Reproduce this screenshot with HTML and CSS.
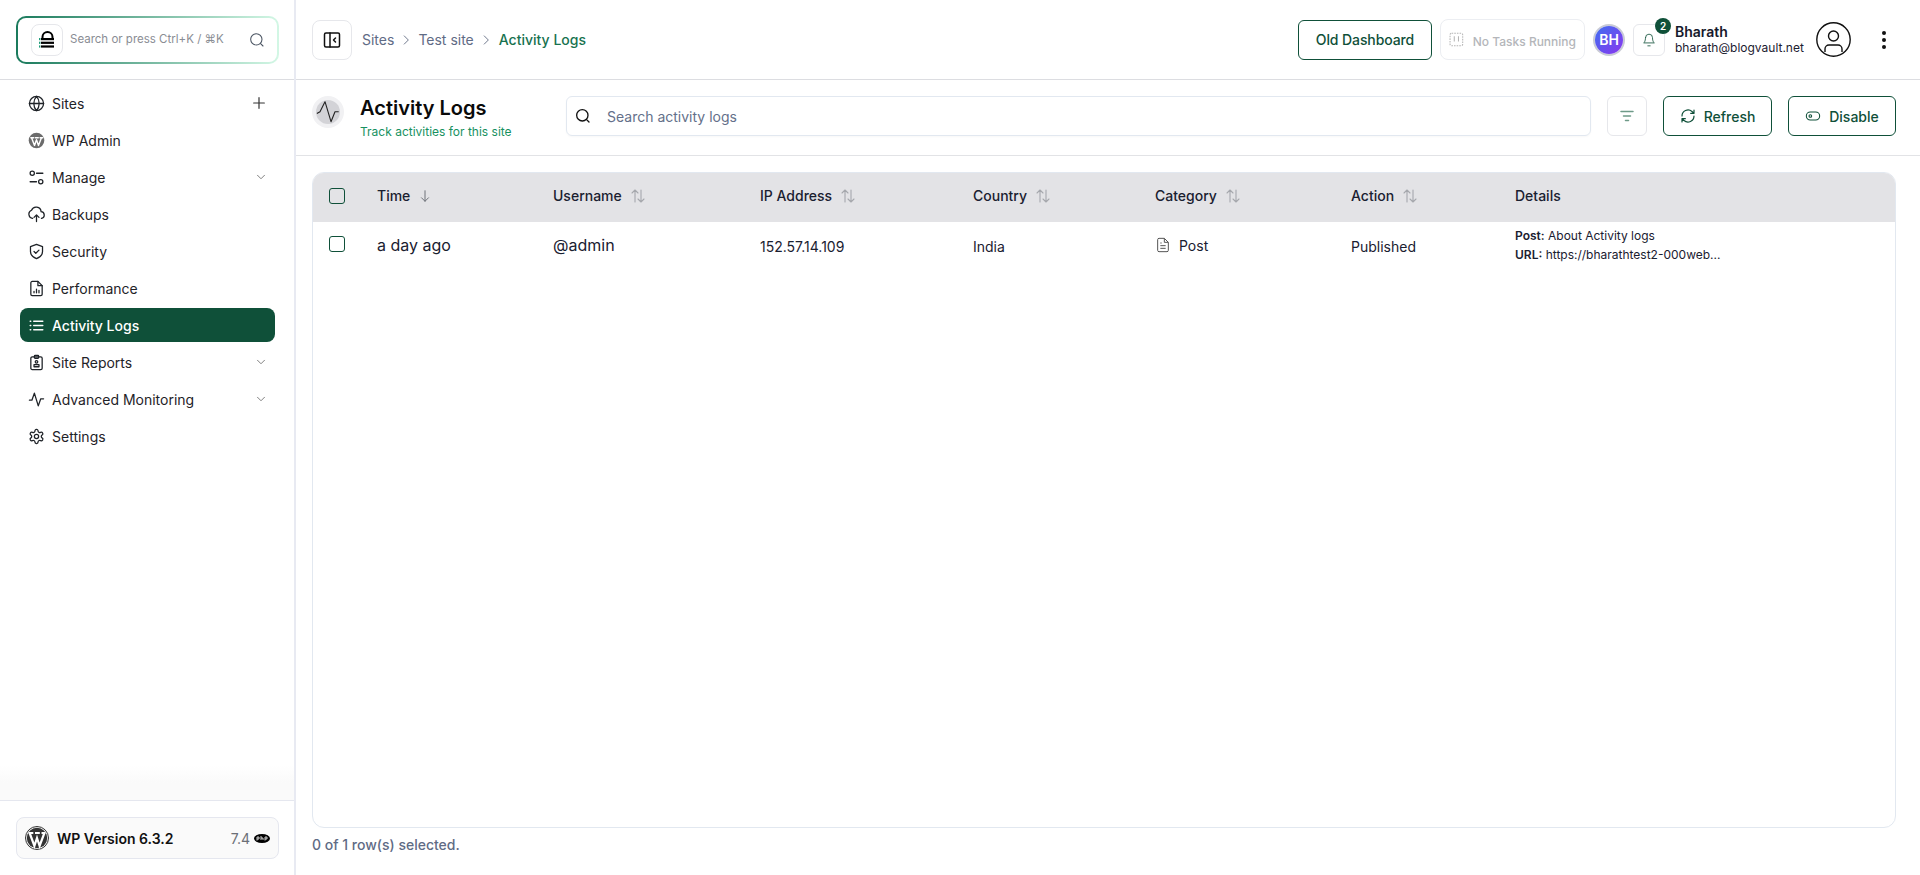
FILE: index.html
```html
<!DOCTYPE html>
<html lang="en">
<head>
<meta charset="utf-8">
<title>Activity Logs</title>
<link rel="stylesheet" href="styles.css">
</head>
<body>
<div class="app">
  <aside class="sidebar">
    <div class="side-top">
      <div class="search-grad">
        <div class="search-inner">
          <span class="logo-box">
            <svg width="16" height="18" viewBox="0 0 16 18"><path d="M3.500 7.500V6a5 5 0 0 1 10 0v1.500" fill="none" stroke="#000" stroke-width="2"/><rect x="2" y="7" width="13" height="2.200" fill="#000"/><rect x="2" y="10.700" width="13" height="2.200" fill="#000"/><rect x="2" y="14.400" width="13" height="2.200" fill="#000"/><rect x="0" y="7" width="1.400" height="2.200" fill="#1f9d7a"/><rect x="0" y="10.700" width="1.400" height="2.200" fill="#1f9d7a"/><rect x="0" y="14.400" width="1.400" height="2.200" fill="#1f9d7a"/></svg>
          </span>
          <span class="search-hint">Search or press Ctrl+K / ⌘K</span>
          <svg class="search-ico" width="16" height="16" viewBox="0 0 24 24" fill="none" stroke="#4b5563" stroke-width="1.600" stroke-linecap="round"><circle cx="11" cy="11" r="8.500"/><path d="m21 21-3.600-3.600"/></svg>
        </div>
      </div>
    </div>
    <nav class="nav">
      <a class="nav-item"><svg class="ni" viewBox="0 0 24 24"><circle cx="12" cy="12" r="10"/><path d="M2 12h20M12 2a15 15 0 0 1 0 20M12 2a15 15 0 0 0 0 20"/></svg><span class="nav-label">Sites</span><svg class="plus" viewBox="0 0 24 24"><path d="M12 4v16M4 12h16"/></svg></a>
      <a class="nav-item"><svg class="ni wp" viewBox="0 0 24 24"><circle cx="12" cy="12" r="11" fill="#6b6b6b" stroke="none"/><path d="M5 8l4.200 11L12 11l2.800 8L19 8M4 8h4M10.500 8h4M17 8h4" fill="none" stroke="#fff" stroke-width="2"/></svg><span class="nav-label">WP Admin</span></a>
      <a class="nav-item"><svg class="ni" viewBox="0 0 24 24"><circle cx="6" cy="6" r="3"/><path d="M12 6h9M3 18h9"/><circle cx="18" cy="18" r="3"/></svg><span class="nav-label">Manage</span><svg class="chev" viewBox="0 0 24 24"><path d="m6 9 6 6 6-6"/></svg></a>
      <a class="nav-item"><svg class="ni" viewBox="0 0 24 24"><path d="M6.500 17.500A6 6 0 0 1 5 6a7 7 0 0 1 13.500 2A4.800 4.800 0 0 1 19 17.500M12 22v-9M8.500 16l3.500-3.500 3.500 3.500"/></svg><span class="nav-label">Backups</span></a>
      <a class="nav-item"><svg class="ni" viewBox="0 0 24 24"><path d="M12 2l8.500 3v7c0 5-3.700 8.300-8.500 10-4.800-1.700-8.500-5-8.500-10V5z"/><path d="m8.500 12 2.500 2.500 4.500-4.500"/></svg><span class="nav-label">Security</span></a>
      <a class="nav-item"><svg class="ni" viewBox="0 0 24 24"><path d="M14 2H6a2 2 0 0 0-2 2v16a2 2 0 0 0 2 2h12a2 2 0 0 0 2-2V8z"/><path d="M14 2v6h6M8.500 18v-2M12 18v-5M15.500 18v-3.500"/></svg><span class="nav-label">Performance</span></a>
      <a class="nav-item active"><svg class="ni" viewBox="0 0 24 24"><path d="M8 6h13M8 12h13M8 18h13M3 6h1M3 12h1M3 18h1"/></svg><span class="nav-label">Activity Logs</span></a>
      <a class="nav-item"><svg class="ni" viewBox="0 0 24 24"><rect x="4" y="4" width="16" height="18" rx="2"/><rect x="9" y="2" width="6" height="4" rx="1"/><circle cx="12" cy="11" r="1.800"/><path d="M8.500 18v-3h7v3z"/></svg><span class="nav-label">Site Reports</span><svg class="chev" viewBox="0 0 24 24"><path d="m6 9 6 6 6-6"/></svg></a>
      <a class="nav-item"><svg class="ni" viewBox="0 0 24 24"><path d="M2 13h3.500L9 3l5.500 18L18 11h4"/></svg><span class="nav-label">Advanced Monitoring</span><svg class="chev" viewBox="0 0 24 24"><path d="m6 9 6 6 6-6"/></svg></a>
      <a class="nav-item"><svg class="ni" viewBox="0 0 24 24"><path d="M12.200 2h-.4a2 2 0 0 0-2 2v.2a2 2 0 0 1-1 1.700l-.4.300a2 2 0 0 1-2 0l-.2-.1a2 2 0 0 0-2.700.7l-.2.400a2 2 0 0 0 .7 2.700l.2.100a2 2 0 0 1 1 1.700v.5a2 2 0 0 1-1 1.700l-.2.100a2 2 0 0 0-.7 2.700l.2.400a2 2 0 0 0 2.700.7l.2-.1a2 2 0 0 1 2 0l.4.300a2 2 0 0 1 1 1.700v.2a2 2 0 0 0 2 2h.4a2 2 0 0 0 2-2v-.2a2 2 0 0 1 1-1.700l.4-.3a2 2 0 0 1 2 0l.2.100a2 2 0 0 0 2.700-.7l.2-.4a2 2 0 0 0-.7-2.700l-.2-.1a2 2 0 0 1-1-1.700v-.5a2 2 0 0 1 1-1.700l.2-.1a2 2 0 0 0 .7-2.700l-.2-.4a2 2 0 0 0-2.700-.7l-.2.100a2 2 0 0 1-2 0l-.4-.3a2 2 0 0 1-1-1.700V4a2 2 0 0 0-2-2z"/><circle cx="12" cy="12" r="3"/></svg><span class="nav-label">Settings</span></a>
    </nav>
    <div class="side-fade"></div>
    <div class="side-foot">
      <div class="wp-box">
        <svg class="wp-logo" viewBox="0 0 24 24"><circle cx="12" cy="12" r="11.500" fill="none" stroke="#333" stroke-width="1"/><circle cx="12" cy="12" r="10.200" fill="#333"/><path d="M4.800 7.500l4.600 12.500L12 12l2.600 8 4.600-12.500M3.500 7h4.800M10 7h4.800M16.500 7h4" fill="none" stroke="#fff" stroke-width="2.200"/></svg>
        <span class="wp-name">WP Version 6.3.2</span>
        <span class="php-num">7.4</span>
        <svg class="php-logo" width="16" height="9" viewBox="0 0 16 9"><ellipse cx="8" cy="4.500" rx="8" ry="4.500" fill="#000"/><path d="M3 6.500V3h2v2H3M7 2v4M7 4h2v2M11 6.500V3h2v2h-2" fill="none" stroke="#fff" stroke-width=".8"/></svg>
      </div>
    </div>
  </aside>
  <main class="main">
    <header class="topbar">
      <button class="collapse">
        <svg width="18" height="18" viewBox="0 0 18 18" fill="none" stroke="#111" stroke-width="1.500" stroke-linejoin="round" stroke-linecap="round"><rect x="1.500" y="2" width="15" height="14" rx="1.500"/><path d="M7 2v14M12.500 7 10.500 9l2 2"/></svg>
      </button>
      <div class="crumbs">
        <span>Sites</span>
        <svg class="crumb-sep" viewBox="0 0 24 24"><path d="m9 5 7 7-7 7"/></svg>
        <span>Test site</span>
        <svg class="crumb-sep" viewBox="0 0 24 24"><path d="m9 5 7 7-7 7"/></svg>
        <span class="crumb-now">Activity Logs</span>
      </div>
      <div class="top-right">
        <button class="btn old">Old Dashboard</button>
        <div class="tasks">
          <svg width="15" height="15" viewBox="0 0 14 14" fill="none" stroke="#b5b5b5" stroke-width="1" stroke-dasharray="1.500 1"><rect x="1" y="1" width="12" height="12" rx="1.500"/><path d="M5 4v5M9 4v5" stroke-dasharray="none"/></svg>
          <span class="tasks-text">No Tasks Running</span>
        </div>
        <div class="avatar">BH</div>
        <div class="bell">
          <svg width="14" height="16" viewBox="0 0 24 26" fill="none" stroke="#0f5039" stroke-width="1.400" stroke-linecap="round" stroke-linejoin="round"><path d="M6 9a6 6 0 0 1 12 0c0 7 3 9 3 9H3s3-2 3-9M10 23h4"/></svg>
          <span class="badge">2</span>
        </div>
        <div class="user">
          <div class="user-name">Bharath</div>
          <div class="user-mail">bharath@blogvault.net</div>
        </div>
        <svg class="profile" width="35" height="35" viewBox="0 0 35 35" fill="none" stroke="#111" stroke-width="1.400"><circle cx="17.500" cy="17.500" r="16.700"/><circle cx="17.500" cy="14" r="5"/><path d="M9 30v-3a4 4 0 0 1 4-4h9a4 4 0 0 1 4 4v3"/></svg>
        <svg class="dots" width="6" height="20" viewBox="0 0 6 20"><circle cx="3" cy="3" r="2" fill="#111"/><circle cx="3" cy="10" r="2" fill="#111"/><circle cx="3" cy="17" r="2" fill="#111"/></svg>
      </div>
    </header>
    <section class="pagehead">
      <div class="pg-ico">
        <span class="pg-ico-in">
          <svg width="24" height="24" viewBox="0 0 24 24" fill="none" stroke="#222" stroke-width="1.100" stroke-linecap="round" stroke-linejoin="round"><path d="M1.300 13.300 4 11.700 9 1.700l6 20 4-10h3.300"/></svg>
        </span>
      </div>
      <div class="pg-title">
        <h1>Activity Logs</h1>
        <p>Track activities for this site</p>
      </div>
      <div class="pg-search">
        <svg width="16" height="16" viewBox="0 0 24 24" fill="none" stroke="#111" stroke-width="2" stroke-linecap="round"><circle cx="11" cy="11" r="8.500"/><path d="m21 21-3.600-3.600"/></svg>
        <span>Search activity logs</span>
      </div>
      <button class="filter">
        <svg width="16" height="12" viewBox="0 0 16 12" stroke="#6e9a88" stroke-width="1.500" stroke-linecap="round"><path d="M2 1.500h12M4.500 6h7M6.500 10.500h3"/></svg>
      </button>
      <button class="btn act refresh">
        <svg width="16" height="16" viewBox="0 0 24 24" fill="none" stroke="#0f5039" stroke-width="1.800" stroke-linecap="round" stroke-linejoin="round"><path d="M3 12a9 9 0 0 1 15-6.700L21 8M21 3v5h-5M21 12a9 9 0 0 1-15 6.700L3 16M3 21v-5h5"/></svg>
        Refresh
      </button>
      <button class="btn act disable">
        <svg width="16" height="16" viewBox="0 0 24 24" fill="none" stroke="#0f5039" stroke-width="1.600"><rect x="2" y="6" width="20" height="12" rx="6"/><circle cx="8" cy="12" r="2"/></svg>
        Disable
      </button>
    </section>
    <section class="content">
      <div class="card">
        <div class="row head">
          <span class="check-cell"><span class="check"></span></span>
          <span class="th">Time <svg class="sort on" viewBox="0 0 16 16"><path d="M8 2v12M4 10l4 4 4-4"/></svg></span>
          <span class="th">Username <svg class="sort" viewBox="0 0 16 16"><path d="M5 14V2M2 5l3-3 3 3M11 2v12M8 11l3 3 3-3"/></svg></span>
          <span class="th">IP Address <svg class="sort" viewBox="0 0 16 16"><path d="M5 14V2M2 5l3-3 3 3M11 2v12M8 11l3 3 3-3"/></svg></span>
          <span class="th">Country <svg class="sort" viewBox="0 0 16 16"><path d="M5 14V2M2 5l3-3 3 3M11 2v12M8 11l3 3 3-3"/></svg></span>
          <span class="th">Category <svg class="sort" viewBox="0 0 16 16"><path d="M5 14V2M2 5l3-3 3 3M11 2v12M8 11l3 3 3-3"/></svg></span>
          <span class="th">Action <svg class="sort" viewBox="0 0 16 16"><path d="M5 14V2M2 5l3-3 3 3M11 2v12M8 11l3 3 3-3"/></svg></span>
          <span class="th">Details</span>
        </div>
        <div class="row body">
          <span class="check-cell"><span class="check"></span></span>
          <span class="td big">a day ago</span>
          <span class="td big">@admin</span>
          <span class="td">152.57.14.109</span>
          <span class="td">India</span>
          <span class="td cat"><svg width="16" height="16" viewBox="0 0 24 24" fill="none" stroke="#555" stroke-width="1.500" stroke-linejoin="round"><path d="M14 2H6a2 2 0 0 0-2 2v16a2 2 0 0 0 2 2h12a2 2 0 0 0 2-2V8z"/><path d="M14 2v6h6M8 13h8M8 17h8M8 9h2"/></svg>Post</span>
          <span class="td">Published</span>
          <span class="details">
            <span class="dline"><b>Post:</b> About Activity logs</span>
            <span class="dline"><b>URL:</b> https://bharathtest2-000web...</span>
          </span>
        </div>
      </div>
      <p class="selected">0 of 1 row(s) selected.</p>
    </section>
  </main>
</div>
</body>
</html>
```
FILE: styles.css
```css
* { box-sizing: border-box; }
html, body { margin: 0; padding: 0; height: 100%; }
body { font-family: "Inter", "Liberation Sans", sans-serif; color: #111827; background: #fff; overflow: hidden; }
button { font-family: inherit; background: #fff; cursor: pointer; padding: 0; }
h1, p { margin: 0; }

.app { display: flex; height: 875px; }

.sidebar { width: 296px; flex: none; border-right: 2px solid #e8eaf2; display: flex; flex-direction: column; }
.side-top { height: 80px; flex: none; padding: 16px 16px 0; border-bottom: 1px solid #dcdde1; }
.search-grad { height: 48px; width: 263px; border-radius: 10px; padding: 2px; background: linear-gradient(90deg, #1a7a5c 0%, #d3f7e5 100%); }
.search-inner { height: 100%; background: #fff; border-radius: 8px; display: flex; align-items: center; padding: 0 12px 0 13px; }
.logo-box { width: 32px; height: 32px; border: 1px solid #e6e7eb; border-radius: 8px; display: flex; align-items: center; justify-content: center; flex: none; }
.search-hint { font-size: 11.500px; color: #8a8d94; margin-left: 7px; margin-top: -2px; flex: 1; white-space: nowrap; }
.search-ico { flex: none; }

.nav { padding: 6px 19px 0 20px; display: flex; flex-direction: column; gap: 3px; }
.nav-item { display: flex; align-items: center; height: 34px; border-radius: 8px; padding: 0 10px 0 8px; font-size: 14px; color: #1f2328; }
.nav-item.active { background: #0f5039; color: #fff; font-weight: 500; }
.ni { width: 17px; height: 17px; flex: none; margin-right: 7px; fill: none; stroke: #1f2328; stroke-width: 1.800; stroke-linecap: round; stroke-linejoin: round; }
.active .ni { stroke: #fff; }
.nav-label { flex: 1; white-space: nowrap; }
.plus { width: 16px; height: 16px; fill: none; stroke: #333; stroke-width: 1.800; stroke-linecap: round; margin-right: -2px; }
.chev { width: 14px; height: 14px; fill: none; stroke: #777; stroke-width: 1.600; stroke-linecap: round; stroke-linejoin: round; margin-right: -3px; }

.side-fade { flex: 1; background: linear-gradient(180deg, #fff 90%, #fafafa 95%, #fafafa 100%); }
.side-foot { height: 75px; flex: none; border-top: 1px solid #e5e7ef; padding: 16px 16px 0; }
.wp-box { width: 263px; height: 42px; border: 1px solid #e5e7ef; border-radius: 8px; background: #fafafa; display: flex; align-items: center; padding: 0 8px; }
.wp-logo { width: 24px; height: 24px; flex: none; }
.wp-name { font-size: 14px; font-weight: 600; color: #111; margin-left: 8px; flex: 1; white-space: nowrap; }
.php-num { font-size: 14px; color: #6b6f76; margin-right: -1px; }
.php-logo { margin-left: 5px; }

.main { flex: 1; min-width: 0; display: flex; flex-direction: column; }
.topbar { height: 80px; flex: none; border-bottom: 1px solid #dcdde1; display: flex; align-items: center; padding: 0 16px; }
.collapse { width: 40px; height: 40px; border: 1px solid #e6e7eb; border-radius: 8px; display: flex; align-items: center; justify-content: center; flex: none; }
.crumbs { display: flex; align-items: center; font-size: 14px; color: #5f6b85; margin-left: 10px; gap: 5px; font-weight: 400; }
.crumb-sep { width: 14px; height: 14px; fill: none; stroke: #667085; stroke-width: 1.600; stroke-linecap: round; stroke-linejoin: round; }
.crumb-now { color: #17724f; font-weight: 500; margin-left: 1px; }

.top-right { margin-left: auto; display: flex; align-items: center; }
.btn { border: 1px solid #0f5039; border-radius: 6px; color: #0f5039; font-weight: 500; font-size: 14px; }
.old { width: 134px; height: 40px; letter-spacing: -.1px; }
.tasks { width: 145px; height: 41px; margin-left: 8px; border: 1px solid #eceef2; border-radius: 8px; display: flex; align-items: center; gap: 9px; padding: 0 8px; font-size: 12px; color: #b4b6ba; font-weight: 500; white-space: nowrap; }
.tasks-text { margin-top: 4px; }
.avatar { width: 28px; height: 28px; margin-left: 10px; border-radius: 50%; background: linear-gradient(135deg, #3f6ff0, #8a36ee); box-shadow: 0 0 0 2px #c9cbd6; color: #fff; font-size: 14px; font-weight: 600; display: flex; align-items: center; justify-content: center; flex: none; }
.bell { width: 32px; height: 32px; margin-left: 10px; border: 1px solid #e6e7eb; border-radius: 6px; display: flex; align-items: center; justify-content: center; position: relative; flex: none; }
.badge { position: absolute; top: -7px; right: -7px; width: 16px; height: 16px; border-radius: 50%; background: #0f5039; color: #fff; font-size: 10px; font-weight: 600; display: flex; align-items: center; justify-content: center; }
.user { margin-left: 10px; width: 129px; }
.user-name { font-size: 14px; font-weight: 600; line-height: 16px; color: #16192c; }
.user-mail { font-size: 12px; line-height: 16px; color: #1c2030; white-space: nowrap; }
.profile { margin-left: 12px; flex: none; }
.dots { margin-left: 30px; margin-right: 17px; flex: none; }

.pagehead { height: 76px; flex: none; border-bottom: 1px solid #e2e3e6; display: flex; align-items: center; padding: 0 24px 3px 16px; }
.pg-ico { width: 32px; height: 32px; margin-top: -8px; border-radius: 50%; background: #f1f1f3; display: flex; align-items: center; justify-content: center; flex: none; }
.pg-ico-in { width: 24px; height: 24px; border-radius: 50%; background: #d3d3d7; display: flex; align-items: center; justify-content: center; }
.pg-title { margin-left: 16px; margin-top: 5px; width: 206px; flex: none; }
.pg-title h1 { font-size: 20px; font-weight: 600; line-height: 24px; color: #0a0a0a; }
.pg-title p { font-size: 12px; line-height: 18px; color: #17915f; white-space: nowrap; margin-top: 3px; }
.pg-search { flex: 1; height: 40px; border: 1px solid #e2e8f0; border-radius: 6px; display: flex; align-items: center; gap: 16px; padding: 0 8px; font-size: 14px; color: #64708a; min-width: 0; box-shadow: 0 1px 2px rgba(0,0,0,.03); }
.filter { width: 40px; height: 40px; margin-left: 16px; border: 1px solid #e6e7eb; border-radius: 6px; display: flex; align-items: center; justify-content: center; flex: none; }
.act { height: 40px; display: flex; align-items: center; justify-content: center; gap: 8px; flex: none; }
.refresh { width: 109px; margin-left: 16px; }
.disable { width: 108px; margin-left: 16px; }

.content { flex: 1; padding: 16px 24px 0 16px; display: flex; flex-direction: column; min-height: 0; }
.card { height: 656px; flex: none; border: 1px solid #e2e8f0; border-radius: 12px; overflow: hidden; }
.row { display: grid; grid-template-columns: 64px 176px 207px 213px 182px 196px 164px 1fr; align-items: center; }
.head { height: 49px; background: #e3e3e6; padding-bottom: 4px; }
.body { height: 48px; }
.check-cell { display: flex; padding-left: 16px; }
.check { width: 16px; height: 16px; border: 1.200px solid #0f5039; border-radius: 3px; background: transparent; }
.body .check-cell { margin-top: -4px; }
.th { font-size: 14px; font-weight: 500; color: #1a2030; display: flex; align-items: center; gap: 8px; white-space: nowrap; }
.sort { width: 16px; height: 16px; fill: none; stroke: #a6a8ad; stroke-width: 1.100; stroke-linecap: round; stroke-linejoin: round; }
.sort.on { stroke: #6b6f76; width: 14px; height: 14px; }
.td { font-size: 14px; color: #1a2030; white-space: nowrap; }
.td.big { font-size: 16px; margin-top: -2px; }
.cat { display: flex; align-items: center; gap: 8px; margin-top: -2px; }
.details { display: flex; flex-direction: column; font-size: 12px; line-height: 19px; color: #1a2030; white-space: nowrap; margin-top: -2px; }
.details b { font-weight: 600; }
.dline { display: block; }
.selected { font-size: 14px; font-weight: 500; color: #5f6b85; margin-top: 7px; line-height: 20px; }
```
